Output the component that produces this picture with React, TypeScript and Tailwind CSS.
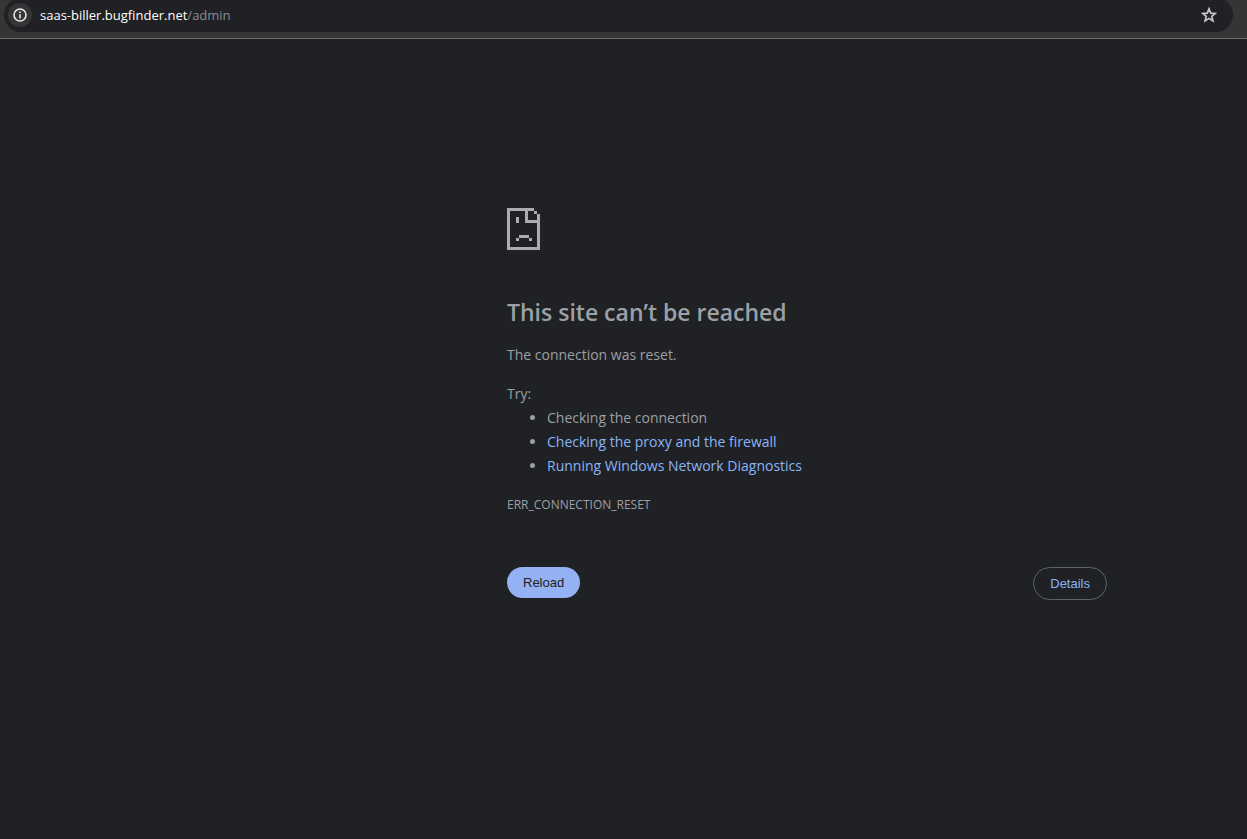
import React from 'react'

const suggestions = [
    { text: 'Checking the connection', link: false },
    { text: 'Checking the proxy and the firewall', link: true },
    { text: 'Running Windows Network Diagnostics', link: true },
]

const AddressBar: React.FC = () => (
    <header className="h-[39px] overflow-hidden bg-[#353535] border-b border-[#6b6b6b] pl-1 pr-[14px]">
        <div className="h-[34px] -mt-[2px] bg-[#202124] rounded-full flex items-center pl-1 pr-4">
            <button type="button" aria-label="View site information" className="w-6 h-6 rounded-full bg-[#353535] flex items-center justify-center text-[#e8e8e8]">
                <svg width="14" height="14" viewBox="0 0 14 14" fill="none">
                    <circle cx="7" cy="7" r="6" stroke="currentColor" strokeWidth="1.6" />
                    <path d="M6.2 3.5h1.6v1.6H6.2zM6.2 6.2h1.6v4.3H6.2z" fill="currentColor" />
                </svg>
            </button>
            <a href="#" className="ml-2 text-[13px] leading-5 text-[#8b8c8e]">
                <span className="text-white">saas-biller.bugfinder.net</span>/admin
            </a>
            <button type="button" aria-label="Bookmark this page" className="ml-auto text-[#c7c7c7]">
                <svg width="16" height="16" viewBox="0 0 16 16" fill="none">
                    <path d="M8 1.8l1.7 4.3 4.6.3-3.5 3 1.1 4.5L8 11.4l-3.9 2.5 1.1-4.5-3.5-3 4.6-.3z" stroke="currentColor" strokeWidth="1.7" />
                </svg>
            </button>
        </div>
    </header>
)

const SadPage: React.FC = () => (
    <svg width="33" height="42" viewBox="0 0 33 42" shapeRendering="crispEdges" fill="#acacac" aria-hidden="true">
        <path d="M0 0h27v3h-6v9h12v30H0zM3 3v36h27V15H18V3z" fillRule="evenodd" />
        <path d="M27 3h3v3h-3zM30 6h3v6h-3z" />
        <path d="M9 9h3v6H9zM12 27h10v3H12zM9 30h3v3H9zM22 30h3v3h-3z" />
    </svg>
)

const App: React.FC = () => {
    return (
        <div className="min-h-screen bg-[#202124] text-[#9aa0a6] font-['Open_Sans','Noto_Sans',sans-serif]">
            <AddressBar />
            <main className="w-[600px] max-w-full ml-auto mr-[140px] pt-[169px]">
                <SadPage />
                <h1 className="mt-[46px] text-[23px] leading-8 font-semibold">This site can’t be reached</h1>
                <p className="mt-[15px] text-sm leading-6">The connection was reset.</p>
                <div className="mt-[15px] text-sm leading-6">
                    <p>Try:</p>
                    <ul className="list-disc pl-10">
                        {suggestions.map(item => (
                            <li key={item.text}>
                                {item.link ? <a href="#" className="text-[#8ab4f8]">{item.text}</a> : item.text}
                            </li>
                        ))}
                    </ul>
                </div>
                <p className="mt-[15px] text-xs leading-6">ERR_CONNECTION_RESET</p>
                <div className="mt-[50px] flex items-start justify-between font-['Liberation_Sans',Arial,sans-serif] text-[13px]">
                    <button type="button" className="h-[31px] px-4 rounded-full bg-[#94b2f3] text-[#202124]">Reload</button>
                    <button type="button" className="h-[33px] px-4 rounded-full border border-[#5f6368] text-[#8ab4f8]">Details</button>
                </div>
            </main>
        </div>
    )
}

export default App
